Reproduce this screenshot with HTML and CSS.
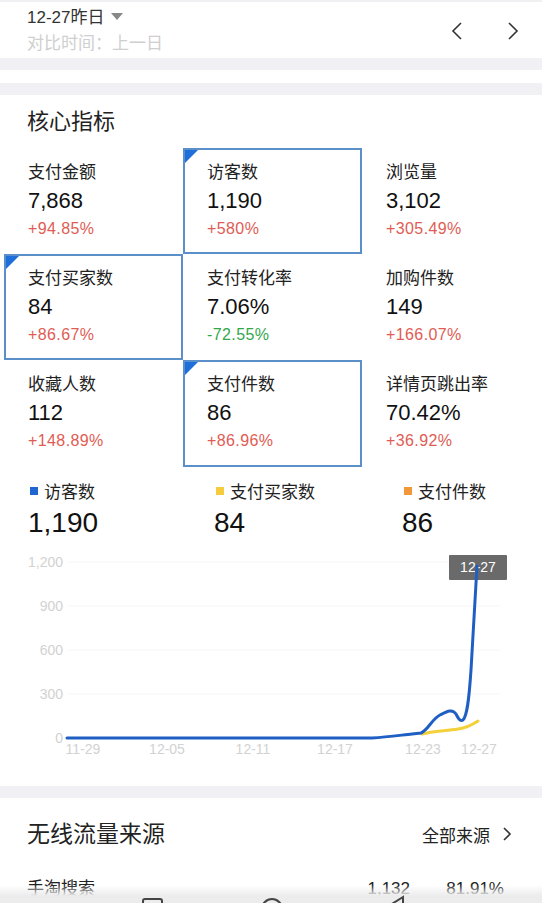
FILE: index.html
```html
<!DOCTYPE html>
<html lang="zh-CN">

<head>
    <meta charset="UTF-8" />
    <meta name="viewport" content="width=device-width, initial-scale=1.0" />
    <title>生意参谋 | 实时概况</title>
    <link rel="stylesheet" href="styles.css">
</head>

<body>

    <header class="topbar">
        <div class="date-picker">
            <div class="date-main">12-27昨日 <span class="caret"></span></div>
            <div class="date-compare">对比时间：上一日</div>
        </div>
        <div class="date-nav">
            <svg width="14" height="20" viewBox="0 0 14 20"><polyline points="11,2 3,10 11,18" /></svg>
            <svg width="14" height="20" viewBox="0 0 14 20"><polyline points="3,2 11,10 3,18" /></svg>
        </div>
    </header>

    <div class="band"></div>
    <div class="spacer"></div>
    <div class="band"></div>

    <section class="core">
        <h2 class="section-title">核心指标</h2>

        <div class="metric-grid">
            <div class="metric">
                <div class="metric-label">支付金额</div>
                <div class="metric-value">7,868</div>
                <div class="metric-change up">+94.85%</div>
            </div>
            <div class="metric selected">
                <div class="metric-label">访客数</div>
                <div class="metric-value">1,190</div>
                <div class="metric-change up">+580%</div>
            </div>
            <div class="metric">
                <div class="metric-label">浏览量</div>
                <div class="metric-value">3,102</div>
                <div class="metric-change up">+305.49%</div>
            </div>
            <div class="metric selected">
                <div class="metric-label">支付买家数</div>
                <div class="metric-value">84</div>
                <div class="metric-change up">+86.67%</div>
            </div>
            <div class="metric">
                <div class="metric-label">支付转化率</div>
                <div class="metric-value">7.06%</div>
                <div class="metric-change down">-72.55%</div>
            </div>
            <div class="metric">
                <div class="metric-label">加购件数</div>
                <div class="metric-value">149</div>
                <div class="metric-change up">+166.07%</div>
            </div>
            <div class="metric">
                <div class="metric-label">收藏人数</div>
                <div class="metric-value">112</div>
                <div class="metric-change up">+148.89%</div>
            </div>
            <div class="metric selected">
                <div class="metric-label">支付件数</div>
                <div class="metric-value">86</div>
                <div class="metric-change up">+86.96%</div>
            </div>
            <div class="metric">
                <div class="metric-label">详情页跳出率</div>
                <div class="metric-value">70.42%</div>
                <div class="metric-change up">+36.92%</div>
            </div>
        </div>

        <div class="legend">
            <div class="legend-item">
                <div class="legend-label"><span class="dot blue"></span>访客数</div>
                <div class="legend-value">1,190</div>
            </div>
            <div class="legend-item">
                <div class="legend-label"><span class="dot yellow"></span>支付买家数</div>
                <div class="legend-value">84</div>
            </div>
            <div class="legend-item">
                <div class="legend-label"><span class="dot orange"></span>支付件数</div>
                <div class="legend-value">86</div>
            </div>
        </div>

        <svg class="chart" width="542" height="220" viewBox="0 545 542 220">
            <g class="grid-lines">
                <line x1="68" y1="562" x2="500" y2="562" />
                <line x1="68" y1="606" x2="500" y2="606" />
                <line x1="68" y1="650" x2="500" y2="650" />
                <line x1="68" y1="694" x2="500" y2="694" />
            </g>
            <g class="y-labels">
                <text x="63" y="567">1,200</text>
                <text x="63" y="611">900</text>
                <text x="63" y="655">600</text>
                <text x="63" y="699">300</text>
                <text x="63" y="743">0</text>
            </g>
            <g class="x-labels">
                <text x="83" y="754">11-29</text>
                <text x="167" y="754">12-05</text>
                <text x="253" y="754">12-11</text>
                <text x="335" y="754">12-17</text>
                <text x="423" y="754">12-23</text>
                <text x="479" y="754">12-27</text>
            </g>
            <rect class="tip" x="449" y="555" width="58" height="25" rx="1" />
            <text class="tip-text" x="478" y="572">12-27</text>
            <path class="line-yellow" d="M422 734 C432 731 445 731 458 729 C466 728 472 725 478 721" />
            <path class="line-blue" d="M67 738 L372 738 C388 737 402 735 412 734 L421 733 C428 730 432 719 440 715 C446 712 452 708 456 714 C458 718 460 722 463 720 C467 716 469 700 471 670 C473 630 475 595 477 566" />
        </svg>
    </section>

    <div class="band"></div>

    <section class="sources">
        <div class="sources-head">
            <h2 class="section-title">无线流量来源</h2>
            <a class="more">全部来源
                <svg width="10" height="16" viewBox="0 0 10 16"><polyline points="2,2 8,8 2,14" /></svg>
            </a>
        </div>
        <div class="source-row">
            <span class="source-name">手淘搜索</span>
            <span class="source-count">1,132</span>
            <span class="source-pct">81.91%</span>
        </div>
    </section>

    <div class="nav-overlay">
        <svg width="542" height="18" viewBox="0 0 542 18">
            <rect x="143" y="14" width="19" height="19" rx="2" />
            <circle cx="272" cy="24" r="10" />
            <polygon points="403,12 387,22 403,32" />
        </svg>
    </div>

</body>

</html>
```

FILE: styles.css
```css
* {
    box-sizing: border-box;
}

body {
    font-family: 'Liberation Sans', 'Noto Sans CJK SC', sans-serif;
    background-color: #fff;
    color: #222;
    margin: 0;
    padding: 0;
    width: 542px;
}

.topbar {
    height: 58px;
    display: flex;
    justify-content: space-between;
    align-items: center;
    padding: 0 22px 0 27px;
    border-top: 2px solid #f0f0f2;
}

.date-main {
    font-size: 17px;
    line-height: 20px;
    color: #333;
    margin-top: 2px;
}

.caret {
    display: inline-block;
    width: 0;
    height: 0;
    border-left: 6px solid transparent;
    border-right: 6px solid transparent;
    border-top: 7px solid #888;
    margin-left: 2px;
    vertical-align: 3px;
}

.date-compare {
    font-size: 17px;
    line-height: 20px;
    color: #cfcfcf;
    margin-top: 6px;
}

.date-nav {
    display: flex;
    gap: 42px;
    margin-top: 2px;
}

.date-nav polyline,
.more polyline {
    fill: none;
    stroke: #333;
    stroke-width: 1.6;
}

.band {
    height: 12px;
    background-color: #f1f1f5;
}

.spacer {
    height: 13px;
}

.section-title {
    font-size: 22px;
    font-weight: normal;
    line-height: 28px;
    margin: 0;
    color: #222;
}

.core .section-title {
    padding: 13px 0 0 27px;
    margin-bottom: 12px;
}

.metric-grid {
    display: grid;
    grid-template-columns: repeat(3, 179px);
    grid-template-rows: 106px 106px 107px;
    padding-left: 4px;
}

.metric {
    position: relative;
    border: 2px solid transparent;
    padding: 12px 0 0 22px;
}

.metric.selected {
    border-color: #5a8fca;
}

.metric.selected::before {
    content: "";
    position: absolute;
    top: 0;
    left: 0;
    border-top: 13px solid #1f6fdb;
    border-right: 13px solid transparent;
}

.metric-label {
    font-size: 17px;
    line-height: 22px;
    color: #222;
}

.metric-value {
    font-size: 22px;
    line-height: 28px;
    margin-top: 3px;
    color: #111;
}

.metric-change {
    font-size: 16px;
    line-height: 20px;
    letter-spacing: 0.4px;
    margin-top: 4px;
}

.up {
    color: #e05c54;
}

.down {
    color: #33a84b;
}

.legend {
    display: grid;
    grid-template-columns: 186px 188px 1fr;
    padding-left: 28px;
}

.legend-label {
    font-size: 17px;
    line-height: 22px;
    margin-top: 15px;
    color: #222;
}

.dot {
    display: inline-block;
    width: 8px;
    height: 8px;
    margin: 0 6px 0 2px;
    vertical-align: 3px;
}

.dot.blue {
    background-color: #1f66d1;
}

.dot.yellow {
    background-color: #f6cc3c;
}

.dot.orange {
    background-color: #f3983a;
}

.legend-value {
    font-size: 28px;
    line-height: 32px;
    margin-top: 3px;
    color: #111;
}

.chart {
    display: block;
    margin-top: 6px;
    margin-bottom: 21px;
}

.grid-lines line {
    stroke: #f6f6f6;
    stroke-width: 1;
}

.y-labels text {
    font-size: 14px;
    fill: #d2d2d2;
    text-anchor: end;
}

.x-labels text {
    font-size: 14px;
    fill: #d2d2d2;
    text-anchor: middle;
}

.tip {
    fill: #6a6a6a;
}

.tip-text {
    font-size: 14px;
    fill: #fff;
    text-anchor: middle;
}

.line-blue {
    fill: none;
    stroke: #1f5fc4;
    stroke-width: 3;
    stroke-linecap: round;
}

.line-yellow {
    fill: none;
    stroke: #f3d13b;
    stroke-width: 3;
    stroke-linecap: round;
}

.sources-head {
    display: flex;
    justify-content: space-between;
    align-items: center;
    padding: 21px 30px 0 27px;
    height: 51px;
}

.sources-head .section-title {
    font-size: 23px;
    line-height: 30px;
}

.more {
    font-size: 17px;
    color: #222;
    display: flex;
    align-items: center;
    gap: 12px;
}

.source-row {
    display: flex;
    align-items: center;
    padding: 30px 38px 0 27px;
    font-size: 17px;
    line-height: 20px;
}

.source-name {
    flex: 1;
}

.source-count {
    width: 60px;
    text-align: right;
}

.source-pct {
    width: 94px;
    text-align: right;
}

.nav-overlay {
    position: fixed;
    left: 0;
    bottom: 0;
    width: 542px;
    height: 18px;
    background: linear-gradient(rgba(240, 240, 240, 0), #ececec 60%);
}

.nav-overlay svg {
    display: block;
}

.nav-overlay rect,
.nav-overlay circle,
.nav-overlay polygon {
    fill: none;
    stroke: #444;
    stroke-width: 2;
}
```
